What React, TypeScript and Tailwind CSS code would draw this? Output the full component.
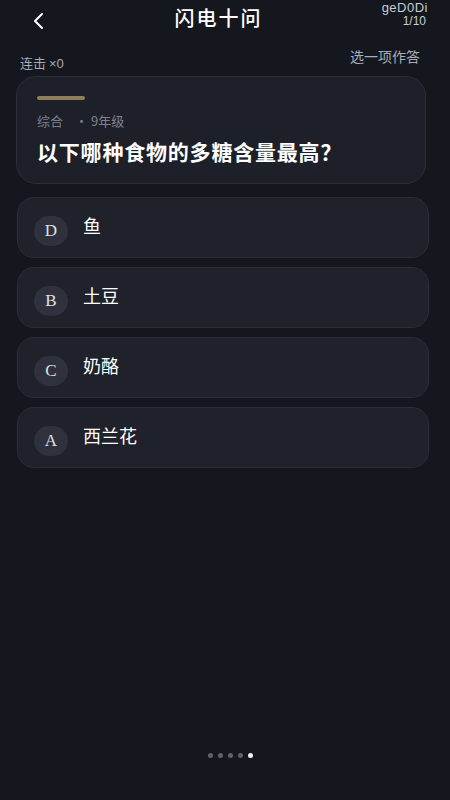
import React from 'react';

type Option = { key: string; label: string };

const options: Option[] = [
  { key: 'D', label: '鱼' },
  { key: 'B', label: '土豆' },
  { key: 'C', label: '奶酪' },
  { key: 'A', label: '西兰花' },
];

const cjk = { fontFamily: '"Noto Sans CJK SC", "Noto Sans", sans-serif' };

const App: React.FC = () => {
  return (
    <div className="w-[450px] h-[800px] bg-[#15171e] text-white flex flex-col overflow-hidden" style={cjk}>
      {/* Header */}
      <div className="relative h-[40px] flex items-center justify-center">
        <button className="absolute left-[30px] top-[11px] text-white">
          <svg width="18" height="20" viewBox="0 0 18 20" fill="none">
            <path d="M12 3 L5 10 L12 17" stroke="white" strokeWidth="2" strokeLinecap="round" strokeLinejoin="round" />
          </svg>
        </button>
        <h1 className="text-[20px] font-medium tracking-[2px] -mt-[4px] mr-[13px]">闪电十问</h1>
        <div
          className="absolute right-[22px] top-[1px] flex flex-col items-end leading-[12px] text-[#c9ccd4]"
          style={{ fontFamily: '"Liberation Sans", Arial, sans-serif' }}
        >
          <span className="text-[13px] tracking-[0.5px] pt-[1px]">geD0Di</span>
          <span className="text-[12px] mt-[1px] mr-[2px]">1/10</span>
        </div>
      </div>

      {/* Sub row */}
      <div className="flex items-center justify-between px-[20px] mt-[7px] text-[#a9acb6]">
        <span className="text-[13px] mt-[6px]">
          连击 <span style={{ fontFamily: '"Liberation Sans", Arial, sans-serif' }}>×0</span>
        </span>
        <span className="text-[14px] mr-[10px] -mt-[7px]">选一项作答</span>
      </div>

      {/* Question card */}
      <div className="ml-[16px] mr-[24px] mt-[2px] rounded-[20px] bg-[#1e2029] border border-[#2b2e39] px-[20px] pt-[19px] pb-[17px]">
        <div className="w-[48px] h-[4px] rounded-full bg-[#8f7e5c]" />
        <div className="mt-[11px] text-[13px] text-[#7e818d] flex items-center">
          <span>综合</span>
          <span className="ml-[12px]">· 9年级</span>
        </div>
        <div className="mt-[7px] text-[21px] font-semibold tracking-[0.8px] leading-[29px]">以下哪种食物的多糖含量最高？</div>
      </div>

      {/* Options */}
      <div className="mt-[13px] flex flex-col gap-[9px] ml-[17px] mr-[21px]">
        {options.map((o) => (
          <div
            key={o.key}
            className="h-[61px] rounded-[17px] bg-[#1f212b] border border-[#2a2d38] flex items-center pl-[16px]"
          >
            <div
              className="w-[34px] h-[30px] rounded-full bg-[#2f323d] flex items-center justify-center text-[17px] text-[#dfe1e6] mt-[6px]"
              style={{ fontFamily: '"Liberation Serif", "Times New Roman", serif' }}
            >
              {o.key}
            </div>
            <span className="ml-[15px] text-[18px] text-white -mt-[4px]">{o.label}</span>
          </div>
        ))}
      </div>

      <div className="flex-1" />

      {/* Page dots */}
      <div className="flex items-center justify-center gap-[5px] mb-[42px] ml-[10px]">
        <span className="w-[5px] h-[5px] rounded-full bg-[#5d616c]" />
        <span className="w-[5px] h-[5px] rounded-full bg-[#5d616c]" />
        <span className="w-[5px] h-[5px] rounded-full bg-[#5d616c]" />
        <span className="w-[5px] h-[5px] rounded-full bg-[#5d616c]" />
        <span className="w-[5px] h-[5px] rounded-full bg-[#f2f3f5]" />
      </div>
    </div>
  );
};

export default App;
